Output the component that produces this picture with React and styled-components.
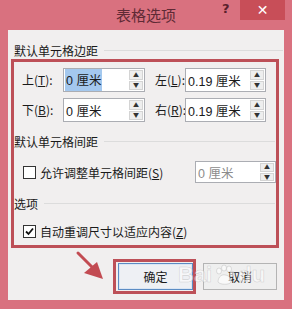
import React from "react";
import styled, { createGlobalStyle } from "styled-components";

const GlobalStyle = createGlobalStyle`
  html, body {
    margin: 0;
    padding: 0;
    background: #d9717f;
  }
  body {
    width: 292px;
    height: 309px;
    overflow: hidden;
    font-family: "Noto Sans CJK SC", "Liberation Sans", sans-serif;
    font-size: 12px;
    color: #1a1a1a;
  }
`;

const Frame = styled.div`
  position: relative;
  width: 292px;
  height: 309px;
  display: flex;
  flex-direction: column;
  background: #d9717f;
`;

const TitleBar = styled.div`
  position: relative;
  height: 30px;
  display: flex;
  align-items: center;
  justify-content: center;
`;

const Title = styled.div`
  font-size: 15px;
  color: #5e2a35;
  margin-top: -2px;
`;

const Help = styled.div`
  position: absolute;
  left: 222px;
  top: 1px;
  font-family: "DejaVu Sans", sans-serif;
  font-weight: bold;
  font-size: 13px;
  color: #5a1f2c;
`;

const Close = styled.div`
  position: absolute;
  left: 240px;
  top: 0;
  width: 45px;
  height: 20px;
  background: #c84e58;
  color: #fff;
  display: flex;
  align-items: center;
  justify-content: center;
  font-family: "DejaVu Sans", sans-serif;
  font-size: 14px;
  font-weight: bold;
`;

const Client = styled.div`
  margin: 0 8px;
  height: 270px;
  background: #f1efef;
  display: flex;
  flex-direction: column;
`;

const GroupHeader = styled.div`
  display: flex;
  align-items: center;
  gap: 6px;
  height: 16px;
  margin: ${(p) => p.$margin || "0"};
  padding-left: ${(p) => p.$indent || "0"};
  white-space: nowrap;
  &::after {
    content: "";
    flex: 1;
    height: 1px;
    background: #dcdcdc;
    margin-right: 1px;
  }
`;

const RedBox = styled.div`
  margin: 1px 5px 0 3px;
  border: 3px solid #bd5058;
  display: flex;
  flex-direction: column;
  padding: 6px 0 7px 0;
  height: 189px;
  box-sizing: border-box;
`;

const MarginRow = styled.div`
  display: grid;
  grid-template-columns: 41px 82px 40px 81px;
  padding-left: 8px;
  align-items: center;
  margin-bottom: ${(p) => p.$mb || "0"};
  & > :nth-child(3) {
    margin-left: 10px;
  }
`;

const Label = styled.span`
  white-space: nowrap;
  padding-bottom: 2px;
`;

const SpinBox = styled.div`
  display: flex;
  height: ${(p) => p.$h || "24px"};
  width: ${(p) => p.$w || "82px"};
  box-sizing: border-box;
  border: 1px solid #abadb3;
  background: #fff;
`;

const SpinText = styled.div`
  flex: 1;
  display: flex;
  align-items: center;
  padding-left: 2px;
  font-family: "Liberation Sans", "Noto Sans CJK SC", sans-serif;
  font-size: 12.5px;
  color: ${(p) => (p.$disabled ? "#8c8c8c" : "#1a1a1a")};
`;

const Selected = styled.span`
  background: #a4c8ee;
  padding: 1px 1px 2px 1px;
  margin-left: -1px;
`;

const Spinner = styled.div`
  width: 16px;
  display: flex;
  flex-direction: column;
  gap: 1px;
  padding: 1px;
  box-sizing: border-box;
`;

const SpinBtn = styled.div`
  flex: 1;
  background: #eeeeee;
  border: 1px solid #d4d4d4;
  display: flex;
  align-items: center;
  justify-content: center;
  font-size: 6px;
  color: #333;
  line-height: 1;
`;

const CheckRow = styled.div`
  display: flex;
  align-items: center;
  padding-left: 9px;
  height: ${(p) => p.$h || "22px"};
  margin: ${(p) => p.$margin || "0"};
`;

const Box = styled.div`
  width: 13px;
  height: 13px;
  box-sizing: border-box;
  border: 1px solid #333;
  background: #fff;
  margin-right: 4px;
  display: flex;
  align-items: center;
  justify-content: center;
`;

const CheckText = styled.span`
  flex: 1;
  white-space: nowrap;
`;

const Buttons = styled.div`
  display: flex;
  justify-content: flex-end;
  align-items: center;
  gap: 7px;
  padding-right: 7px;
  margin-top: 11px;
`;

const Highlight = styled.div`
  border: 3px solid #bd5058;
  padding: 1px 0 1px 2px;
`;

const Button = styled.div`
  width: ${(p) => p.$w || "75px"};
  height: 27px;
  box-sizing: border-box;
  display: flex;
  align-items: center;
  justify-content: center;
  background: ${(p) => (p.$primary ? "#eef0f4" : "#efefef")};
  border: 1px solid ${(p) => (p.$primary ? "#5b8cc4" : "#b4b4b4")};
  box-shadow: ${(p) => (p.$primary ? "inset 0 0 0 1px #dbe6f3" : "none")};
`;

const Watermark = styled.div`
  position: absolute;
  left: 178px;
  top: 262px;
  display: flex;
  align-items: center;
  gap: 2px;
  font-family: "Liberation Sans", sans-serif;
  font-weight: bold;
  font-size: 22px;
  color: rgba(255, 255, 255, 0.55);
  -webkit-text-stroke: 0.6px rgba(170, 170, 170, 0.45);
  pointer-events: none;
`;

const Arrow = styled.svg`
  position: absolute;
  left: 70px;
  top: 245px;
`;

function Spin({ value, selected, disabled, w, h }) {
  return (
    <SpinBox $w={w} $h={h}>
      <SpinText $disabled={disabled}>
        {selected ? <Selected>{value}</Selected> : value}
      </SpinText>
      <Spinner>
        <SpinBtn>▲</SpinBtn>
        <SpinBtn>▼</SpinBtn>
      </Spinner>
    </SpinBox>
  );
}

function CheckMark() {
  return (
    <svg width="11" height="11" viewBox="0 0 11 11">
      <path d="M2 5.5 L4.5 8 L9 2.5" fill="none" stroke="#111" strokeWidth="1.8" />
    </svg>
  );
}

export default function App() {
  return (
    <Frame>
      <GlobalStyle />
      <TitleBar>
        <Title>表格选项</Title>
        <Help>?</Help>
        <Close>✕</Close>
      </TitleBar>
      <Client>
        <GroupHeader $margin="12px 0 0 0" $indent="6px">
          默认单元格边距
        </GroupHeader>
        <RedBox>
          <MarginRow $mb="6px">
            <Label>
              上(<u>T</u>):
            </Label>
            <Spin value="0 厘米" selected />
            <Label>
              左(<u>L</u>):
            </Label>
            <Spin value="0.19 厘米" w="81px" />
          </MarginRow>
          <MarginRow>
            <Label>
              下(<u>B</u>):
            </Label>
            <Spin value="0 厘米" />
            <Label>
              右(<u>R</u>):
            </Label>
            <Spin value="0.19 厘米" w="81px" />
          </MarginRow>
          <GroupHeader $margin="11px 0 0 0">默认单元格间距</GroupHeader>
          <CheckRow $margin="12px 0 0 0">
            <Box />
            <CheckText>
              允许调整单元格间距(<u>S</u>)
            </CheckText>
            <Spin value="0 厘米" disabled w="81px" h="22px" />
          </CheckRow>
          <GroupHeader $margin="12px 0 0 0">选项</GroupHeader>
          <CheckRow $margin="12px 0 0 0" $h="16px">
            <Box>
              <CheckMark />
            </Box>
            <CheckText>
              自动重调尺寸以适应内容(<u>Z</u>)
            </CheckText>
          </CheckRow>
        </RedBox>
        <Buttons>
          <Highlight>
            <Button $primary>确定</Button>
          </Highlight>
          <Button $w="74px">取消</Button>
        </Buttons>
      </Client>
      <Watermark>
        <span>Bai</span>
        <svg width="22" height="22" viewBox="0 0 22 22">
          <g fill="rgba(255,255,255,0.6)" stroke="rgba(170,170,170,0.45)" strokeWidth="0.8">
            <ellipse cx="5" cy="7" rx="2.5" ry="3" />
            <ellipse cx="10" cy="4" rx="2.5" ry="3" />
            <ellipse cx="15" cy="5" rx="2.5" ry="3" />
            <ellipse cx="18" cy="10" rx="2.2" ry="2.8" />
            <path d="M4 18 C4 12 9 10 11 11 C14 11 18 14 17 18 C16 21 6 21 4 18 Z" />
          </g>
        </svg>
        <span>du</span>
      </Watermark>
      <Arrow width="50" height="45" viewBox="0 0 50 45">
        <line x1="8" y1="8" x2="24" y2="24" stroke="#c24b52" strokeWidth="3" strokeLinecap="round" />
        <polygon points="14,28 27,17 33,34" fill="#c24b52" />
      </Arrow>
    </Frame>
  );
}
